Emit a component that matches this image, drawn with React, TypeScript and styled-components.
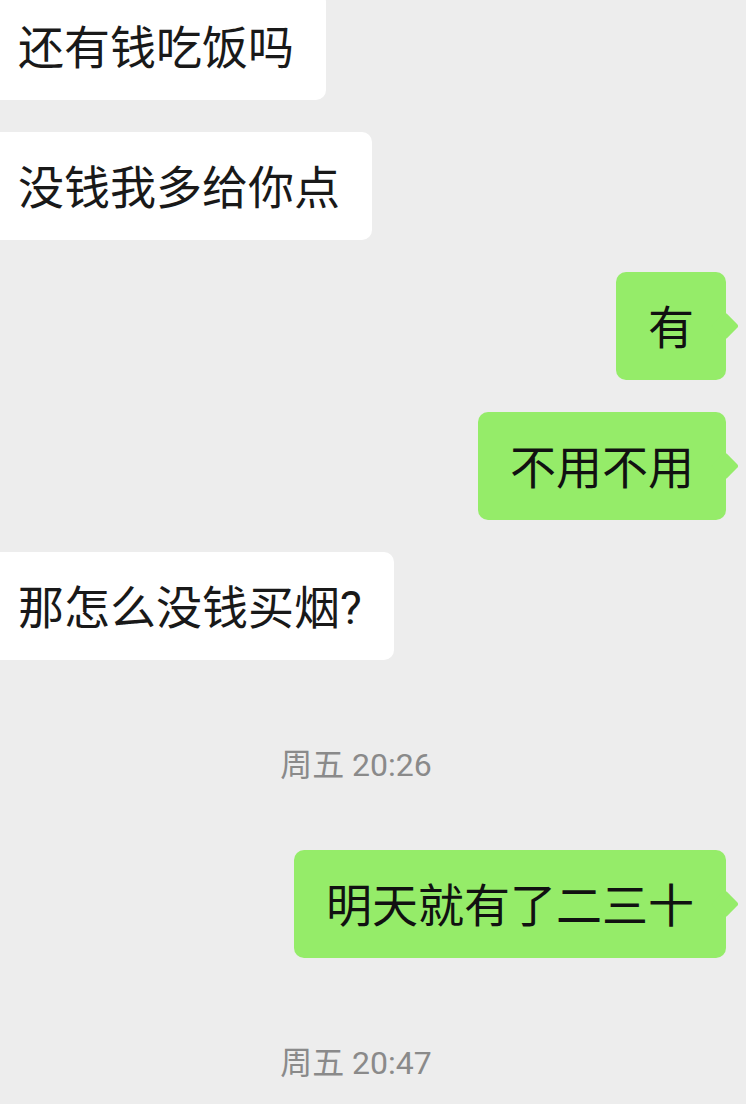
import React from 'react'
import styled, { createGlobalStyle } from 'styled-components'

const GlobalStyle = createGlobalStyle`
  html, body {
    margin: 0;
    padding: 0;
    background: #ededed;
    overflow: hidden;
  }
`

const ChatPage = styled.div`
  width: 746px;
  height: 1104px;
  overflow: hidden;
  background: #ededed;
`

const MessageList = styled.div`
  display: flex;
  flex-direction: column;
  gap: 32px;
  margin-top: -8px;
  padding: 0 20px 0 0;
`

const Row = styled.div<{ $mine?: boolean }>`
  display: flex;
  justify-content: ${(p) => (p.$mine ? 'flex-end' : 'flex-start')};
`

const Bubble = styled.div<{ $mine?: boolean }>`
  position: relative;
  box-sizing: border-box;
  height: 108px;
  display: flex;
  align-items: center;
  padding: 3px 32px 0;
  margin-left: ${(p) => (p.$mine ? '0' : '-14px')};
  border-radius: 10px;
  background: ${(p) => (p.$mine ? '#95ec69' : '#ffffff')};
  color: ${(p) => (p.$mine ? '#111111' : '#191919')};
  font-family: Roboto, 'Noto Sans CJK SC', sans-serif;
  font-size: 46px;
  line-height: 60px;
  white-space: nowrap;

  &::after {
    content: '';
    position: absolute;
    top: 50%;
    width: 20px;
    height: 20px;
    border-radius: 3px;
    background: inherit;
    transform: translateY(-50%) rotate(45deg);
    ${(p) => (p.$mine ? 'right: -9px;' : 'left: -9px;')}
  }
`

const TimeStamp = styled.div`
  margin: 53px 0 33px;
  padding-right: 14px;
  text-align: center;
  font-family: Roboto, 'Noto Sans CJK SC', sans-serif;
  font-size: 32px;
  line-height: 40px;
  color: #8a8a8a;
`

type Item =
  | { kind: 'msg'; text: string; mine?: boolean }
  | { kind: 'time'; text: string }

const items: Item[] = [
  { kind: 'msg', text: '还有钱吃饭吗' },
  { kind: 'msg', text: '没钱我多给你点' },
  { kind: 'msg', text: '有', mine: true },
  { kind: 'msg', text: '不用不用', mine: true },
  { kind: 'msg', text: '那怎么没钱买烟?' },
  { kind: 'time', text: '周五 20:26' },
  { kind: 'msg', text: '明天就有了二三十', mine: true },
  { kind: 'time', text: '周五 20:47' },
]

const App: React.FC = () => (
  <ChatPage>
    <GlobalStyle />
    <MessageList>
      {items.map((item, i) =>
        item.kind === 'time' ? (
          <TimeStamp key={i}>{item.text}</TimeStamp>
        ) : (
          <Row key={i} $mine={item.mine}>
            <Bubble $mine={item.mine}>{item.text}</Bubble>
          </Row>
        )
      )}
    </MessageList>
  </ChatPage>
)

export default App
